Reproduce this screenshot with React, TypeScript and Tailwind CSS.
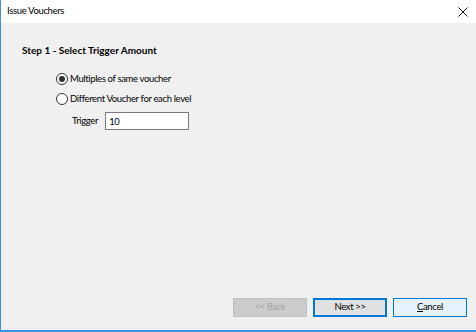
import { useState } from "react"

function Radio({ checked, label, onClick }: { checked: boolean; label: string; onClick: () => void }) {
  return (
    <label className="flex items-center gap-[2px] h-[20px] cursor-default" onClick={onClick}>
      <span className="w-[12px] h-[12px] rounded-full border border-[#333] bg-white flex items-center justify-center">
        {checked && <span className="w-[6px] h-[6px] rounded-full bg-[#333]" />}
      </span>
      <span>{label}</span>
    </label>
  )
}

export default function App() {
  const [mode, setMode] = useState(0)

  return (
    <div
      className="w-[476px] h-[332px] flex flex-col bg-[#f0f0f0] border-l border-b-2 border-[#3a92e0] text-[9.5px] tracking-[-0.35px] text-black overflow-hidden"
      style={{ fontFamily: 'Lato, "Liberation Sans", sans-serif' }}
    >
      <div className="h-[23px] bg-white flex items-center justify-between pl-[6px] pr-[8px] shrink-0">
        <span>Issue Vouchers</span>
        <svg width="10" height="10" viewBox="0 0 10 10" className="text-[#111]">
          <path d="M0.5 0.5 L9.5 9.5 M9.5 0.5 L0.5 9.5" stroke="currentColor" strokeWidth="1" />
        </svg>
      </div>

      <div className="flex-1 flex flex-col pl-[21px] pt-[19px]">
        <h1 className="font-bold text-[10px] tracking-normal leading-[16px]">Step 1 - Select Trigger Amount</h1>

        <div className="flex flex-col pl-[34px] pt-[11px]">
          <Radio checked={mode === 0} label="Multiples of same voucher" onClick={() => setMode(0)} />
          <Radio checked={mode === 1} label="Different Voucher for each level" onClick={() => setMode(1)} />
          <div className="flex items-center gap-[7px] pl-[16px] mt-[3px]">
            <span>Trigger</span>
            <input
              defaultValue="10"
              className="w-[84px] h-[18px] border border-[#7a7a7a] bg-white px-[3px] outline-none"
            />
          </div>
        </div>

        <div className="mt-auto flex justify-end gap-[6px] pr-[9px] pb-[13px]">
          <button disabled className="w-[74px] h-[19px] bg-[#cccccc] border border-[#bfbfbf] text-[#a3a3a3]">
            &lt;&lt; Back
          </button>
          <button className="w-[74px] h-[19px] bg-[#e1e1e1] border-2 border-[#0078d7]">
            Next &gt;&gt;
          </button>
          <button className="w-[74px] h-[19px] bg-[#e5f1fb] border border-[#0078d7]">
            <span className="underline">C</span>ancel
          </button>
        </div>
      </div>
    </div>
  )
}
